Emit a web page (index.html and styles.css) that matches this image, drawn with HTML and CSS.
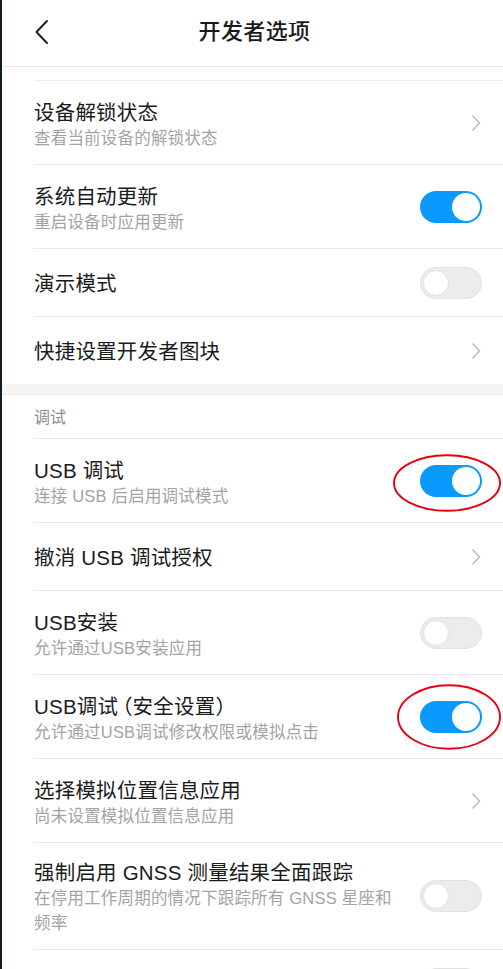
FILE: index.html
```
<!DOCTYPE html>
<html lang="zh-CN">
<head>
<meta charset="utf-8">
<title>开发者选项</title>
<link rel="stylesheet" href="styles.css">
</head>
<body>
<div class="page">
  <header class="topbar">
    <span class="back">
      <svg width="16" height="26" viewBox="0 0 16 26"><polyline points="13,2 2.5,13 13,24" fill="none" stroke="#222" stroke-width="2" stroke-linecap="round" stroke-linejoin="round"/></svg>
    </span>
    <h1 class="title">开发者选项</h1>
    <span></span>
  </header>
  <div class="list">
    <div class="spacer"></div>

    <div class="row two">
      <div class="text"><div class="t">设备解锁状态</div><div class="s">查看当前设备的解锁状态</div></div>
      <svg class="chev" width="10" height="18" viewBox="0 0 10 18"><polyline points="1.5,1.5 8.5,9 1.5,16.5" fill="none" stroke="#bdbdbd" stroke-width="1.5"/></svg>
    </div>

    <div class="row two">
      <div class="text"><div class="t">系统自动更新</div><div class="s">重启设备时应用更新</div></div>
      <span class="switch on"><span class="knob"></span></span>
    </div>

    <div class="row one">
      <div class="text"><div class="t">演示模式</div></div>
      <span class="switch off"><span class="knob"></span></span>
    </div>

    <div class="row one last">
      <div class="text"><div class="t">快捷设置开发者图块</div></div>
      <svg class="chev" width="10" height="18" viewBox="0 0 10 18"><polyline points="1.5,1.5 8.5,9 1.5,16.5" fill="none" stroke="#bdbdbd" stroke-width="1.5"/></svg>
    </div>
  </div>

  <div class="gap"></div>

  <div class="list">
    <div class="section">调试</div>

    <div class="row two">
      <div class="text"><div class="t">USB 调试</div><div class="s">连接 USB 后启用调试模式</div></div>
      <span class="switch on"><span class="knob"></span>
        <svg class="mark m1" width="108" height="58" viewBox="0 0 108 58"><ellipse cx="54" cy="29" rx="53" ry="27.8" fill="none" stroke="#e60012" stroke-width="1.9"/></svg>
      </span>
    </div>

    <div class="row one">
      <div class="text"><div class="t">撤消 USB 调试授权</div></div>
      <svg class="chev" width="10" height="18" viewBox="0 0 10 18"><polyline points="1.5,1.5 8.5,9 1.5,16.5" fill="none" stroke="#bdbdbd" stroke-width="1.5"/></svg>
    </div>

    <div class="row two">
      <div class="text"><div class="t">USB安装</div><div class="s">允许通过USB安装应用</div></div>
      <span class="switch off"><span class="knob"></span></span>
    </div>

    <div class="row two">
      <div class="text"><div class="t">USB调试<span class="paren">（</span>安全设置<span class="paren">）</span></div><div class="s">允许通过USB调试修改权限或模拟点击</div></div>
      <span class="switch on"><span class="knob"></span>
        <svg class="mark m2" width="104" height="66" viewBox="0 0 104 66"><ellipse cx="52" cy="33" rx="51" ry="31.8" fill="none" stroke="#e60012" stroke-width="1.9"/></svg>
      </span>
    </div>

    <div class="row two">
      <div class="text"><div class="t">选择模拟位置信息应用</div><div class="s">尚未设置模拟位置信息应用</div></div>
      <svg class="chev" width="10" height="18" viewBox="0 0 10 18"><polyline points="1.5,1.5 8.5,9 1.5,16.5" fill="none" stroke="#bdbdbd" stroke-width="1.5"/></svg>
    </div>

    <div class="row three">
      <div class="text"><div class="t">强制启用 GNSS 测量结果全面跟踪</div><div class="s">在停用工作周期的情况下跟踪所有 GNSS 星座和频率</div></div>
      <span class="switch off"><span class="knob"></span></span>
    </div>

    <div class="row one">
      <div class="text"></div>
      <span class="switch off"><span class="knob"></span></span>
    </div>
  </div>
</div>
</body>
</html>
```

FILE: styles.css
```
html, body {
  margin: 0;
  padding: 0;
  background: #ffffff;
}

body {
  font-family: "Liberation Sans", "Noto Sans CJK SC", sans-serif;
  color: #1b1b1b;
  overflow: hidden;
  height: 969px;
}

.page {
  border-left: 2px solid #0e1d27;
  min-height: 969px;
  box-sizing: border-box;
  background: #ffffff;
}

.topbar {
  height: 67px;
  box-sizing: border-box;
  border-bottom: 1px solid #e6e6e6;
  display: grid;
  grid-template-columns: 1fr auto 1fr;
  align-items: center;
  padding-bottom: 2px;
}

.back {
  display: flex;
  align-items: center;
  padding-left: 32px;
}

.title {
  margin: 0 0 0 4px;
  font-size: 22px;
  font-weight: 500;
  letter-spacing: 0.4px;
  color: #1a1a1a;
  line-height: 30px;
}

.list {
  margin-left: 32px;
}

.spacer {
  height: 14px;
  box-sizing: border-box;
  border-bottom: 1px solid #ececec;
}

.row {
  display: flex;
  align-items: center;
  box-sizing: border-box;
  border-bottom: 1px solid #e9e9e9;
  padding-right: 21px;
  gap: 16px;
}

.row.two { height: 84px; }
.row.one { height: 68px; }
.row.three { height: 107px; }
.row.last { height: 67px; border-bottom: none; }

.text {
  flex: 1;
  min-width: 0;
  padding-top: 2px;
}

.row.two .text {
  padding-top: 5px;
}

.row.three .text {
  padding-top: 3px;
}

.t {
  font-size: 20.5px;
  line-height: 26px;
  color: #1b1b1b;
  letter-spacing: 0.2px;
}

.paren {
  font-feature-settings: "halt";
}

.paren:first-child,
.t .paren:first-of-type {
  margin-left: 4px;
}

.s {
  font-size: 16.5px;
  line-height: 24.5px;
  color: #a3a3a3;
  letter-spacing: 0.2px;
}

.chev {
  flex: none;
  margin-right: 1px;
  margin-top: 1px;
}

.gap {
  height: 11px;
  box-sizing: border-box;
  background: #f5f5f5;
  border-bottom: 1px solid #ececec;
}

.section {
  height: 44px;
  box-sizing: border-box;
  border-bottom: 1px solid #e9e9e9;
  font-size: 16px;
  line-height: 44px;
  color: #8e8e8e;
  padding-top: 1px;
}

.switch {
  position: relative;
  flex: none;
  width: 62px;
  height: 32px;
  border-radius: 16px;
  box-sizing: border-box;
  display: flex;
  align-items: center;
}

.switch.on {
  background: #0a99fc;
  justify-content: flex-end;
  padding-right: 2px;
}

.switch.on .knob {
  width: 28px;
  height: 28px;
  border-radius: 50%;
  background: #ffffff;
}

.switch.off {
  background: #ececec;
  border: 1px solid #e1e1e1;
  justify-content: flex-start;
  padding-left: 1.5px;
}

.switch.off .knob {
  width: 26px;
  height: 26px;
  border-radius: 50%;
  background: #ffffff;
  border: 1px solid #e0e0e0;
  box-sizing: border-box;
}

.mark {
  position: absolute;
  pointer-events: none;
}

.mark.m1 {
  left: -27px;
  top: -11px;
}

.mark.m2 {
  left: -23px;
  top: -17px;
}
```
